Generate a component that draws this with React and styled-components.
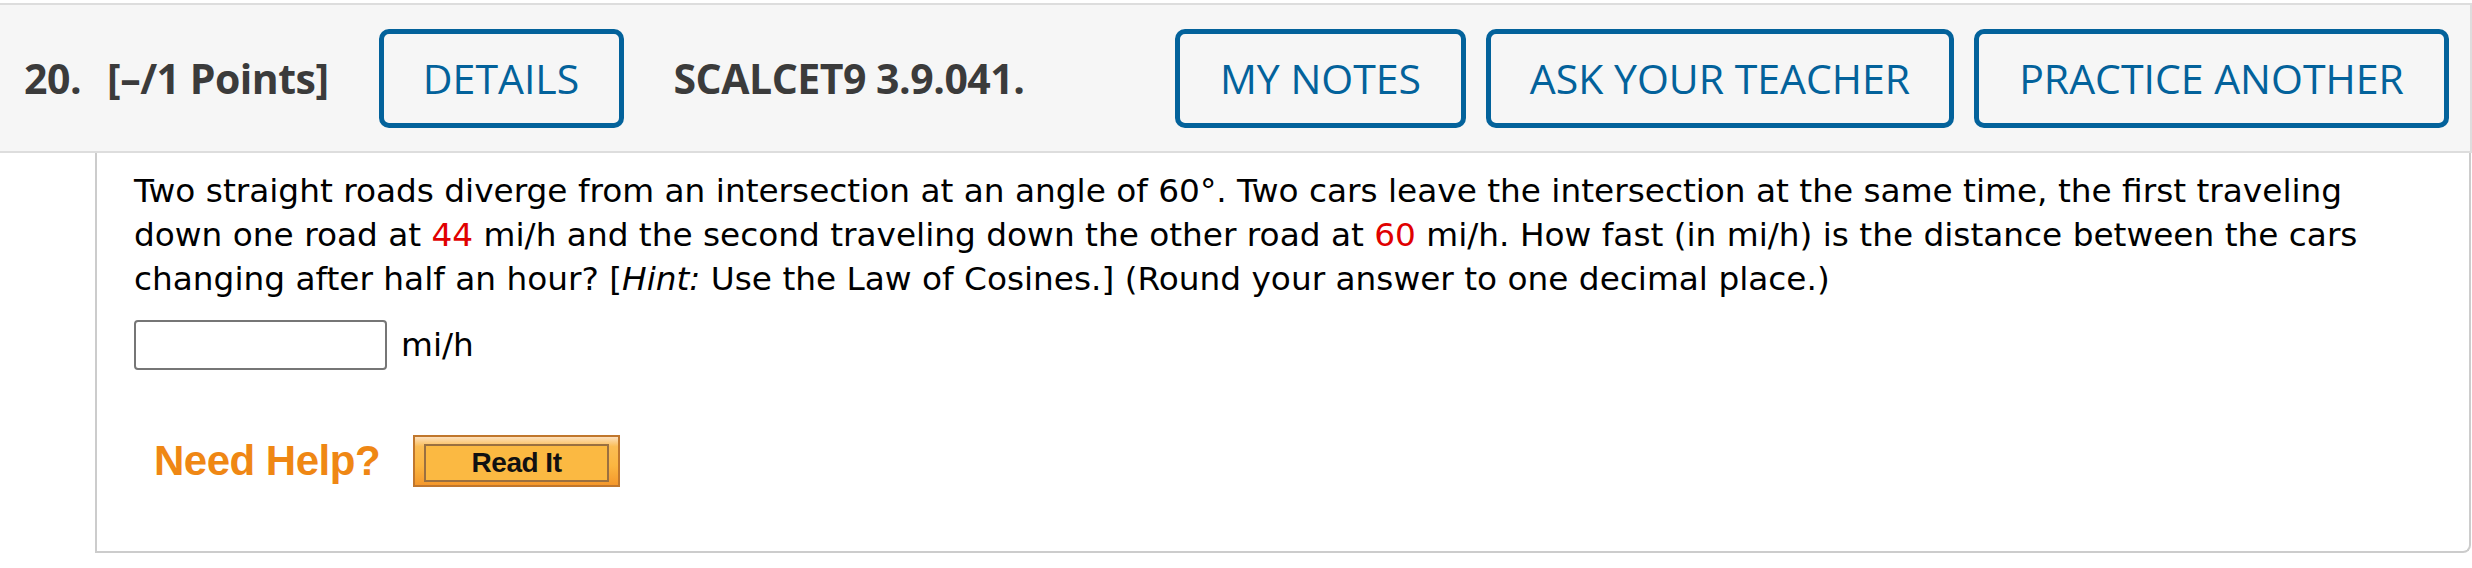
import React from 'react';
import styled, { createGlobalStyle } from 'styled-components';

const GlobalStyle = createGlobalStyle`
  html, body {
    margin: 0;
    padding: 0;
    background: #ffffff;
  }
`;

const Page = styled.div`
  width: 2472px;
  padding-top: 3px;
`;

const Header = styled.div`
  display: flex;
  align-items: center;
  height: 146px;
  padding: 0 21px 0 24px;
  background: #f6f6f6;
  border-top: 2px solid #dddddd;
  border-bottom: 2px solid #dddddd;
  border-right: 2px solid #dddddd;
  box-sizing: content-box;
  width: calc(2470px - 45px);
  font-family: 'Open Sans', 'Liberation Sans', sans-serif;
`;

const HeadText = styled.span`
  font-size: 41px;
  font-weight: 700;
  letter-spacing: -0.5px;
  color: #3b3b3b;
  margin-right: ${(p) => p.gap || 0}px;
  white-space: nowrap;
`;

const OutlineButton = styled.button`
  width: ${(p) => p.w}px;
  height: 99px;
  padding: 0;
  background: transparent;
  border: 5px solid #03629b;
  border-radius: 10px;
  color: #03629b;
  font-family: 'Open Sans', 'Liberation Sans', sans-serif;
  font-size: 41px;
  font-weight: 400;
  white-space: nowrap;
  margin-right: ${(p) => p.gap || 0}px;
  cursor: pointer;
`;

const ButtonGroup = styled.div`
  display: flex;
  gap: 20px;
  margin-left: auto;
`;

const Panel = styled.div`
  margin-left: 95px;
  width: 2376px;
  box-sizing: border-box;
  padding: 16px 70px 0 37px;
  height: 400px;
  border-left: 2px solid #cccccc;
  border-right: 2px solid #cccccc;
  border-bottom: 2px solid #cccccc;
  border-bottom-right-radius: 8px;
  font-family: Verdana, 'DejaVu Sans', sans-serif;
  font-size: 32.75px;
  line-height: 44px;
  color: #000000;
`;

const Question = styled.p`
  margin: 0;
`;

const Num = styled.span`
  color: #e00000;
`;

const AnswerRow = styled.div`
  display: flex;
  align-items: center;
  gap: 14px;
  margin-top: 19px;
`;

const AnswerInput = styled.input`
  width: 253px;
  height: 50px;
  box-sizing: border-box;
  border: 2px solid #767676;
  border-radius: 4px;
  background: #ffffff;
`;

const HelpRow = styled.div`
  display: flex;
  align-items: center;
  gap: 33px;
  margin-top: 65px;
  padding-left: 20px;
`;

const NeedHelp = styled.span`
  font-family: Arial, 'Liberation Sans', sans-serif;
  font-size: 42px;
  font-weight: 700;
  color: #ef8714;
  letter-spacing: -0.5px;
`;

const ReadIt = styled.button`
  width: 207px;
  height: 52px;
  box-sizing: border-box;
  padding: 7px 9px;
  border: 2px solid #c0772d;
  background: linear-gradient(#fde0bd 0%, #fbbd55 20%, #fbb640 60%, #f4982c 100%);
  cursor: pointer;
`;

const ReadItInner = styled.span`
  display: flex;
  align-items: center;
  justify-content: center;
  height: 100%;
  border: 2px solid #9a7040;
  background: #fbb942;
  font-family: Arial, 'Liberation Sans', sans-serif;
  font-size: 28px;
  font-weight: 700;
  letter-spacing: -0.5px;
  color: #111111;
`;

export default function App() {
  return (
    <>
      <GlobalStyle />
      <Page>
        <Header>
          <HeadText gap={26}>20.</HeadText>
          <HeadText gap={50}>[–/1 Points]</HeadText>
          <OutlineButton w={245} gap={50}>DETAILS</OutlineButton>
          <HeadText>SCALCET9 3.9.041.</HeadText>
          <ButtonGroup>
            <OutlineButton w={291}>MY NOTES</OutlineButton>
            <OutlineButton w={468}>ASK YOUR TEACHER</OutlineButton>
            <OutlineButton w={475}>PRACTICE ANOTHER</OutlineButton>
          </ButtonGroup>
        </Header>
        <Panel>
          <Question>
            Two straight roads diverge from an intersection at an angle of 60°. Two cars leave the
            intersection at the same time, the first traveling down one road at <Num>44</Num> mi/h and
            the second traveling down the other road at <Num>60</Num> mi/h. How fast (in mi/h) is the
            distance between the cars changing after half an hour? [<i>Hint:</i> Use the Law of
            Cosines.] (Round your answer to one decimal place.)
          </Question>
          <AnswerRow>
            <AnswerInput type="text" />
            <span>mi/h</span>
          </AnswerRow>
          <HelpRow>
            <NeedHelp>Need Help?</NeedHelp>
            <ReadIt>
              <ReadItInner>Read It</ReadItInner>
            </ReadIt>
          </HelpRow>
        </Panel>
      </Page>
    </>
  );
}
